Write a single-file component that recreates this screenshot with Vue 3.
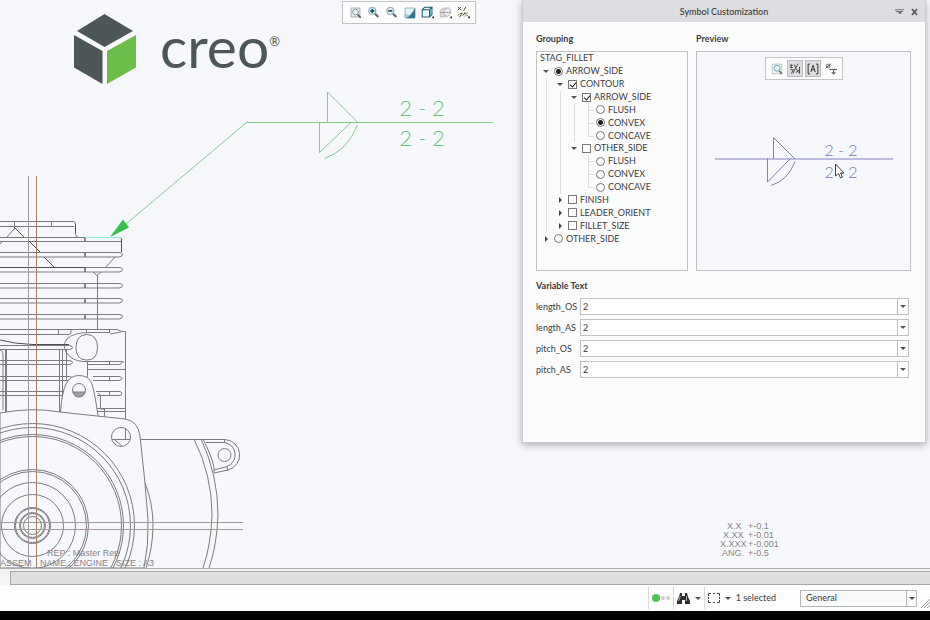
<script setup>
import { ref, reactive } from 'vue'

const tree = reactive([
  { cells: [], label: 'STAG_FILLET' },
  { cells: ['open'], kind: 'radio', group: 'side', label: 'ARROW_SIDE', on: true },
  { cells: ['line', 'open'], kind: 'checkbox', label: 'CONTOUR', on: true },
  { cells: ['line', 'line', 'open'], kind: 'checkbox', label: 'ARROW_SIDE', on: true },
  { cells: ['line', 'line', 'line', 'tee'], kind: 'radio', group: 'arrow', label: 'FLUSH' },
  { cells: ['line', 'line', 'line', 'tee'], kind: 'radio', group: 'arrow', label: 'CONVEX', on: true },
  { cells: ['line', 'line', 'line', 'elbow'], kind: 'radio', group: 'arrow', label: 'CONCAVE' },
  { cells: ['line', 'line', 'open'], kind: 'checkbox', label: 'OTHER_SIDE' },
  { cells: ['line', 'line', 'blank', 'tee'], kind: 'radio', group: 'other', label: 'FLUSH' },
  { cells: ['line', 'line', 'blank', 'tee'], kind: 'radio', group: 'other', label: 'CONVEX' },
  { cells: ['line', 'line', 'blank', 'elbow'], kind: 'radio', group: 'other', label: 'CONCAVE' },
  { cells: ['line', 'shut'], kind: 'checkbox', label: 'FINISH' },
  { cells: ['line', 'shut'], kind: 'checkbox', label: 'LEADER_ORIENT' },
  { cells: ['line', 'shut'], kind: 'checkbox', label: 'FILLET_SIZE' },
  { cells: ['shut'], kind: 'radio', group: 'side', label: 'OTHER_SIDE' },
])

const fields = reactive([
  { name: 'length_OS', value: '2' },
  { name: 'length_AS', value: '2' },
  { name: 'pitch_OS', value: '2' },
  { name: 'pitch_AS', value: '2' },
])

const filter = ref('General')

// y positions of the cooling fins on the cylinder
const upperFins = [252, 267, 283, 298, 314]
const lowerFins = [345, 360, 376, 391]
const wheelRadii = [9, 12, 13, 17, 18, 31, 43, 54, 56, 89, 91, 98, 102]
</script>

<template>
  <div class="app">
    <main class="workspace">
      <svg class="drawing" role="img" aria-label="Engine drawing">
        <g class="ink">
          <path d="M0 221.5H73Q75.500 221.500 75.500 224V234Q75.500 236 78 237M0 226.500H74M14.500 221V226M51.500 221V226M0 237.500H85M0 241.500H121M85 237V241" />
          <path class="dark" d="M121.500 239V252M75.500 224V233M85 237V241" />
          <path d="M119 237.500Q122 237.500 122 240" />
          <g v-for="y in upperFins" :key="y">
            <path :d="`M0 ${y + 0.5}H119Q122.500 ${y + 0.5} 122.500 ${y + 2.5}T119 ${y + 5}H0M85 ${y}V${y + 5}`" />
            <path class="dark" :d="`M85 ${y + 1}V${y + 5}`" />
          </g>
          <path class="dark" d="M14 227L24 237M29 241L40 252M44 257L55 268M0 267.500H85" />
          <path d="M7 237L15 228M0 244L3 241M115 257L105 268M93 272L97 275.500L101 272M97.500 275V329" />
          <path d="M0 329.500H117L122 331.500H125.500V438M0 334.500H69Q72 334 71 330M58.500 329V334M86.500 329V333M109.500 329V333M110 334L121 332" />
          <path d="M110 332.500H90Q73 332.500 67 339Q62 345 66 352Q72 361 83 361.500H121L124 362" />
          <path d="M86.500 334.500Q97.500 334.500 97.500 347.500T86.500 360Q76 360 76 347.500T86.500 334.500Z" />
          <path class="dark" d="M0 340Q15 344 33 344.500H69" />
          <path v-for="y in lowerFins" :key="y" :d="`M0 ${y + 0.5}H69Q72.500 ${y + 0.5} 72.500 ${y + 2.5}T69 ${y + 4.5}H0`" />
          <path d="M5.500 349V412M6.500 349V412M0 350Q3 350 3 356V410M59.500 349V412M62.500 349V408M66.500 349V380" />
          <path d="M87.500 361V377M87 369.500H125M87 364.500H119Q122 364 122 362M93 376.500H119Q122 377 122 378.500T119 380.500H93M96 391.500H119Q122 391.500 122 393.500T119 395.500H97M109.500 361V365M109.500 376V381M109.500 391V396" />
          <path d="M98 393L100.500 395V409H104.500V417M97 408.500H125M97 411.500H125" />
          <path class="sheet" d="M60.500 412Q62 392 66 384Q70 375.500 79 375.500Q89 375.500 92 384Q95 394 98 416" />
          <circle cx="79" cy="390" r="6.500" />
          <path class="shade" d="M73 392H85Q84 397 79 397T73 392Z" />
          <path class="sheet" d="M0 413Q32 407 60 412L125 419Q138 421 140 436L145 483L148 520Q149 545 144 568H0Z" />
          <path d="M145 483Q153 503 153 525T146 568" />
          <circle cx="121" cy="437" r="9.500" />
          <path d="M112 439.500H130M115 440L122 446M125.500 428V439" />
          <circle v-for="r in wheelRadii" :key="r" cx="32.500" cy="525.500" :r="r" />
          <path d="M140 439.500H225A15.500 15.500 0 0 1 228 470L214 473M206 442.500H225A12.500 12.500 0 0 1 227 466.500L214 470M224.500 439V443M227 467L228 471" />
          <path d="M194 439Q212 475 212 515Q211 545 203 568M201 439Q218 475 218 515Q217 545 209 568M203 439Q216 465 214 473" />
          <circle cx="224.500" cy="455" r="6.500" />
        </g>
        <path class="edge" d="M85 237.500H121" />
        <path class="axis" d="M28.500 176V568M0 522.500H243M0 529.500H243" />
        <path class="datum" d="M36.500 176V568" />
        <g class="caption">
          <text x="47" y="556">REP : Master Rep</text>
          <text x="0" y="566">ASSEM</text>
          <text x="40" y="566">NAME : ENGINE</text>
          <text x="116" y="566">SIZE : A3</text>
        </g>
        <g class="caption">
          <text x="727" y="529">X.X</text><text x="748" y="529">+-0.1</text>
          <text x="723" y="538">X.XX</text><text x="748" y="538">+-0.01</text>
          <text x="720" y="547">X.XXX</text><text x="748" y="547">+-0.001</text>
          <text x="722" y="556">ANG.</text><text x="748" y="556">+-0.5</text>
        </g>
        <g class="leader">
          <path d="M126 224L246.500 122.500H493M327.500 122V92L358 122.500M319.500 122V152.500L351 122.500M324.500 158.500Q348 150 357.500 125" />
          <path class="head" d="M110 237L123 219.500L129 227.500Z" />
          <text x="422" y="116">2 - 2</text>
          <text x="422" y="146">2 - 2</text>
        </g>
      </svg>

      <div class="brand">
        <svg width="62" height="70" viewBox="0 0 62 70" aria-hidden="true">
          <path fill="#4d5757" d="M30.500 0L59 17L30.500 33L3 17ZM0 21L28.500 37V70L0 53.500Z" />
          <path fill="#6dbd4b" d="M62 21L33 37V70L62 53.500Z" />
        </svg>
        <span class="word">creo</span><span class="mark">®</span>
      </div>

      <div class="toolbar" role="toolbar" aria-label="View">
        <button type="button" aria-label="Refit">
          <svg viewBox="0 0 16 16"><path fill="#eceeee" stroke="#9a9f9f" d="M2.500 2.500h11v11h-11z" /><circle cx="8" cy="7.500" r="3.500" fill="#dff0f3" stroke="#6f8b93" /><path stroke="#555" stroke-width="2" d="M10.500 10.500l4 4" /></svg>
        </button>
        <button type="button" aria-label="Zoom in">
          <svg viewBox="0 0 16 16"><circle cx="6.500" cy="6" r="4.500" fill="#d8eef3" stroke="#6597a7" /><path stroke="#234f60" stroke-width="2" d="M4 6h5M6.500 3.500v5" /><path stroke="#5b686e" stroke-width="2.500" d="M10 9.500l4 4" /></svg>
        </button>
        <button type="button" aria-label="Zoom out">
          <svg viewBox="0 0 16 16"><circle cx="6.500" cy="6" r="4.500" fill="#e3f0f3" stroke="#6597a7" /><path stroke="#234f60" stroke-width="2" d="M4 6h5" /><path stroke="#5b686e" stroke-width="2.500" d="M10 9.500l4 4" /></svg>
        </button>
        <button type="button" aria-label="Repaint">
          <svg viewBox="0 0 16 16"><path fill="#e6f4f7" stroke="#8aa" d="M2.500 2.500h12v12h-12z" /><path fill="#35758a" d="M15 2v13H3Q10 12 15 2Z" /><path fill="#97c8d4" d="M2 15V9L9 12Z" /></svg>
        </button>
        <button type="button" aria-label="Display style">
          <svg viewBox="0 0 16 16"><path fill="#e9f8fb" stroke="#235b6c" stroke-width="1.300" d="M1.500 4.500h9v9h-9zM1.500 4.500l3-3h9l-3 3M10.500 13.500l3-3v-9" /><path fill="#62a8b8" d="M11 5l2-2v7l-2 2z" /><path fill="#222" d="M14 13h2v2h-2z" /></svg>
        </button>
        <button type="button" aria-label="Saved views">
          <svg viewBox="0 0 16 16"><path fill="#dcdcdc" stroke="#b4b4b4" d="M1.500 5.500l3-3h7v8l-3 3h-7z" /><path fill="#ececec" stroke="#b0b0b0" d="M6 5l5-3 3 2v6l-4 3-4-2z" /><path stroke="#999" d="M1 8h14" /><path fill="#222" d="M14 13h2v2h-2z" /></svg>
        </button>
        <button type="button" aria-label="Datum display">
          <svg viewBox="0 0 16 16"><path stroke="#4d4a30" stroke-width="1.200" d="M1 1l4 4M5 1L1 5M11 1L8 6M3 14l3-5M4 9h3M7 12l3-4M9 9h3M12 11l2 2" /><path stroke="#a49a55" stroke-width="1.200" d="M9 13l4-5M1 12l3-3" /><path fill="#222" d="M14 13h2v2h-2z" /></svg>
        </button>
      </div>

      <section class="dialog" role="dialog" aria-labelledby="dlg-title">
        <header class="titlebar">
          <h1 id="dlg-title">Symbol Customization</h1>
          <div class="window-buttons">
            <button type="button" aria-label="Roll up"><svg viewBox="0 0 10 8"><path stroke="#666" d="M0 1.500h10M1 3.500h8" /><path fill="#666" d="M4 4h3v2h-3z" /></svg></button>
            <button type="button" aria-label="Close"><svg viewBox="0 0 8 8"><path stroke="#555" stroke-width="1.600" d="M1.500 1L6.500 7M6.500 1L1.500 7" /></svg></button>
          </div>
        </header>

        <div class="columns">
          <div class="column">
            <h2>Grouping</h2>
            <div class="panel grouping">
              <ul class="tree">
                <li v-for="(row, i) in tree" :key="i">
                  <template v-for="(cell, j) in row.cells" :key="j">
                    <button v-if="cell === 'open' || cell === 'shut'" type="button" class="toggle" :class="cell" :aria-label="`Toggle ${row.label}`"></button>
                    <span v-else class="guide" :class="cell"></span>
                  </template>
                  <label v-if="row.kind">
                    <input v-if="row.kind === 'radio'" type="radio" :name="row.group" :checked="row.on" />
                    <input v-else type="checkbox" :checked="row.on" />
                    <span>{{ row.label }}</span>
                  </label>
                  <span v-else class="root">{{ row.label }}</span>
                </li>
              </ul>
            </div>
          </div>

          <div class="column">
            <h2>Preview</h2>
            <div class="panel preview">
              <svg class="symbol" viewBox="0 0 213 217" role="img" aria-label="Symbol preview">
                <path d="M18 106.500H196M76.500 106V85L98 106.500M70.500 106V129.500L93 106.500M74 133Q91 128 98 109" />
                <text x="144" y="103">2 - 2</text>
                <text x="144" y="125">2 - 2</text>
                <path class="cursor" d="M138.500 111.500V123.500L141.500 121L143.500 125.500L145.500 124.500L143.500 120.500H147Z" />
              </svg>
              <div class="preview-tools" role="toolbar" aria-label="Preview">
                <button type="button" aria-label="Refit"><svg viewBox="0 0 16 16"><path fill="#eef4f4" stroke="#aebbbb" d="M1.500 1.500h13v13h-13z" /><circle cx="8" cy="7" r="4" fill="#e4f5f6" stroke="#5d9aa2" /><path stroke="#555" stroke-width="2" d="M11 10.500l3.500 4" /></svg></button>
                <button type="button" class="pressed" aria-label="Show values"><svg viewBox="0 0 16 16"><path stroke="#444" stroke-width="1.200" d="M1 3h4M1 6h4M3 2v5M7 2l2 5M12 1L5 14M2 9h4l-3 5M9 7l5 7M14 5v9M9 13l5-4" /></svg></button>
                <button type="button" class="pressed" aria-label="Show text"><svg viewBox="0 0 16 16"><path stroke="#333" stroke-width="1.300" d="M4 1.500H1.500v13H4M12 1.500h2.500v13H12M5 12l3-9 3 9M6 9h4" /></svg></button>
                <button type="button" aria-label="Show origin"><svg viewBox="0 0 16 16"><circle cx="4" cy="4" r="2.500" stroke="#444" /><path stroke="#444" stroke-width="1.300" d="M1 7L8 1M6 8.500h10M11.500 9v5M9 12l2.500 3 2.500-3" /></svg></button>
              </div>
            </div>
          </div>
        </div>

        <div class="variables">
          <h2>Variable Text</h2>
          <div v-for="f in fields" :key="f.name" class="field">
            <label :for="f.name">{{ f.name }}</label>
            <div class="combo">
              <input :id="f.name" v-model="f.value" type="text" />
              <button type="button" :aria-label="`${f.name} values`"><i class="caret"></i></button>
            </div>
          </div>
        </div>
      </section>
    </main>

    <div class="sash"><div class="track"></div></div>

    <footer class="status">
      <div class="group lights"><i class="on"></i><i></i><i></i></div>
      <div class="group">
        <button type="button" aria-label="Find">
          <svg width="13" height="13" viewBox="0 0 13 13"><path fill="#2d2d2d" d="M3 1h2v3h3V1h2l1 4 2 4v3H8V8H5v4H0V9l2-4z" /><path fill="#aaa" d="M3 4h1L2 9H1zM9 4h1v5H9z" /></svg>
          <i class="caret"></i>
        </button>
      </div>
      <div class="group">
        <button type="button" aria-label="Selection mode">
          <svg width="12" height="10" viewBox="0 0 12 10"><path stroke="#444" d="M.5 3V.5H3M5 .5h2M9 .5h2.500V3M11.500 4v2M11.500 7v2.500H9M7 9.500H5M3 9.500H.5V7M.5 6V4" /></svg>
          <i class="caret"></i>
        </button>
        <span class="count">1 selected</span>
      </div>
      <div class="filter">
        <select v-model="filter" aria-label="Selection filter"><option>General</option></select>
        <span class="drop"><i class="caret"></i></span>
      </div>
      <svg class="grip" width="9" height="9" viewBox="0 0 9 9" aria-hidden="true"><path stroke="#aaa" d="M0 9L9 0M3 9L9 3M6 9L9 6" /></svg>
    </footer>
    <div class="base"></div>
  </div>
</template>

<style>
body {
  margin: 0;
}
</style>

<style scoped>
.app {
  display: flex;
  flex-direction: column;
  min-height: 100vh;
  font-family: Lato, "Noto Sans", sans-serif;
  font-size: 9px;
  line-height: 12px;
  color: #3c3c3c;
  background: #fff;
}
button {
  display: flex;
  align-items: center;
  justify-content: center;
  padding: 0;
  border: 0;
  background: none;
  font: inherit;
}
svg {
  display: block;
  fill: none;
}
h1, h2 {
  margin: 0;
  font-size: 9px;
  line-height: 12px;
}
h1 {
  font-weight: 500;
}
h2 {
  font-weight: 700;
}
.workspace {
  position: relative;
  flex: 1;
  min-height: 460px;
  overflow: hidden;
  background: #f7f8fc;
}
.drawing {
  position: absolute;
  inset: 0;
  width: 100%;
  height: 100%;
}
.ink {
  stroke: #7c7c80;
  stroke-width: 1;
}
.ink .dark {
  stroke: #505054;
}
.ink .sheet {
  fill: #f7f8fc;
}
.ink .shade {
  fill: #a0a0a4;
}
.edge {
  stroke: #90e8e2;
}
.axis {
  stroke: #a39a98;
}
.datum {
  stroke: #a08468;
}
.caption {
  fill: #85858a;
  font-family: "Liberation Sans", sans-serif;
  font-size: 9px;
}
.leader {
  stroke: #83cd8d;
}
.leader .head {
  fill: #34c24c;
  stroke: none;
}
.leader text,
.symbol text {
  font-family: Lato, sans-serif;
  font-weight: 300;
  text-anchor: middle;
  stroke: none;
}
.leader text {
  fill: #6fc47b;
  font-size: 22px;
}
.brand {
  position: absolute;
  left: 74px;
  top: 14px;
  display: flex;
  align-items: flex-start;
  color: #4d5757;
  font-family: Lato, sans-serif;
}
.word {
  margin-left: 24px;
  font-size: 57px;
  line-height: 64px;
}
.mark {
  padding-top: 20px;
  font-size: 13px;
  line-height: 14px;
}
.toolbar {
  position: absolute;
  left: 342px;
  top: 1px;
  display: flex;
  gap: 4px;
  padding: 3px 5px 4px;
  border: 1px solid #c3c4c8;
  background: #fdfdfe;
}
.toolbar button {
  width: 14px;
  height: 14px;
}
.toolbar svg {
  width: 13px;
  height: 13px;
}
.dialog {
  position: absolute;
  top: 0;
  right: 4px;
  box-sizing: border-box;
  width: 404px;
  padding-bottom: 64px;
  border: 1px solid #cbccd0;
  border-top: 0;
  background: #fcfcfc;
  box-shadow: 0 2px 7px rgba(60, 60, 70, 0.4);
}
.titlebar {
  display: flex;
  align-items: center;
  justify-content: center;
  height: 22px;
  padding-top: 2px;
  box-sizing: border-box;
  background: #dcdde0;
}
.window-buttons {
  position: absolute;
  right: 6px;
  display: flex;
  gap: 6px;
}
.window-buttons svg {
  width: 9px;
  height: 8px;
}
.columns {
  display: grid;
  grid-template-columns: 152px 1fr;
  gap: 8px;
  padding: 11px 14px 0 13px;
}
.panel {
  box-sizing: border-box;
  height: 220px;
  margin-top: 6px;
  border: 1px solid #c0c1c5;
}
.tree {
  display: grid;
  grid-auto-rows: 1fr;
  height: 193px;
  margin: 0;
  padding: 0 0 0 2px;
  list-style: none;
}
.tree li {
  display: flex;
  align-items: stretch;
}
.tree label {
  display: flex;
  align-items: center;
  gap: 3px;
  padding-left: 1px;
}
.tree .root {
  align-self: center;
  padding-left: 1px;
}
.tree input {
  appearance: none;
  box-sizing: border-box;
  width: 9px;
  height: 9px;
  margin: 0;
  border: 1px solid #77777a;
  background: #fff;
}
.tree input[type="radio"] {
  border-radius: 50%;
}
.tree input[type="radio"]:checked {
  background: radial-gradient(circle, #222 0 2px, #fff 3px);
}
.tree input[type="checkbox"]:checked::after {
  content: "";
  display: block;
  box-sizing: border-box;
  width: 4px;
  height: 6px;
  margin: 0 0 0 2px;
  border: solid #222;
  border-width: 0 1px 1px 0;
  transform: rotate(40deg);
}
.guide,
.toggle {
  position: relative;
  width: 14px;
  flex: none;
}
.guide::before,
.guide::after {
  content: "";
  position: absolute;
  left: 7px;
}
.line::before,
.tee::before {
  top: 0;
  bottom: 0;
  border-left: 1px solid #dedee0;
}
.elbow::before {
  top: 0;
  bottom: 50%;
  border-left: 1px solid #dedee0;
}
.tee::after,
.elbow::after {
  top: 50%;
  right: 1px;
  border-top: 1px solid #dedee0;
}
.toggle::before {
  content: "";
  border: 3px solid transparent;
}
.toggle.open::before {
  border-top-color: #555;
  border-bottom-width: 0;
}
.toggle.shut::before {
  border-left-color: #444;
  border-right-width: 0;
}
.preview {
  position: relative;
  background: #f7f8fc;
}
.symbol {
  width: 100%;
  height: 100%;
  stroke: #8080c4;
}
.symbol text {
  fill: #7272ba;
  font-size: 16px;
}
.symbol .cursor {
  fill: #fff;
  stroke: #444;
}
.preview-tools {
  position: absolute;
  top: 5px;
  left: 68px;
  display: flex;
  gap: 2px;
  padding: 2px 3px;
  border: 1px solid #c3c4c8;
  background: #fdfdfe;
}
.preview-tools button {
  box-sizing: border-box;
  width: 16px;
  height: 17px;
  border: 1px solid transparent;
}
.preview-tools .pressed {
  border-color: #bbbcc0;
  background: #dddee1;
}
.preview-tools svg {
  width: 12px;
  height: 12px;
}
.variables {
  display: flex;
  flex-direction: column;
  gap: 4px;
  padding: 9px 16px 0 13px;
}
.variables h2 {
  margin-bottom: 2px;
}
.field {
  display: grid;
  grid-template-columns: 44px 1fr;
  align-items: center;
}
.combo {
  display: flex;
  box-sizing: border-box;
  height: 17px;
  border: 1px solid #c0c1c4;
  background: #fff;
}
.combo input {
  flex: 1;
  min-width: 0;
  padding: 0 2px;
  border: 0;
  outline: 0;
  background: none;
  font: inherit;
  color: inherit;
}
.combo button {
  width: 11px;
  border-left: 1px solid #c0c1c4;
}
.caret {
  border: 3px solid transparent;
  border-top-color: #555;
  border-bottom-width: 0;
}
.sash {
  padding: 2px 0 0 10px;
  border-top: 1px solid #aaabaf;
  background: #f4f4f7;
}
.track {
  height: 12px;
  border: 1px solid #a6a7aa;
  border-right: 0;
  background: #dedede;
}
.status {
  display: flex;
  align-items: center;
  justify-content: flex-end;
  height: 26px;
  background: #fdfdfd;
}
.group {
  display: flex;
  align-items: center;
  height: 22px;
  padding: 0 3px;
  border-left: 1px solid #d8d8d8;
}
.group button {
  gap: 5px;
}
.lights {
  gap: 1px;
}
.lights i {
  width: 4px;
  height: 4px;
  border-radius: 50%;
  background: #cfcfcf;
}
.lights .on {
  width: 8px;
  height: 8px;
  background: #4cc552;
}
.count {
  margin-left: 5px;
}
.filter {
  position: relative;
  width: 117px;
  margin: 0 4px 0 21px;
}
.filter select {
  appearance: none;
  display: block;
  box-sizing: border-box;
  width: 100%;
  height: 17px;
  padding: 0 5px;
  border: 1px solid #b4b5b8;
  border-radius: 0;
  background: #fafafa;
  font: inherit;
  color: inherit;
}
.drop {
  position: absolute;
  top: 1px;
  right: 1px;
  bottom: 1px;
  display: flex;
  align-items: center;
  width: 9px;
  justify-content: center;
  border-left: 1px solid #b4b5b8;
  pointer-events: none;
}
.grip {
  align-self: flex-end;
  margin: 0 0 3px;
}
.base {
  height: 9px;
  background: #000;
}
</style>
